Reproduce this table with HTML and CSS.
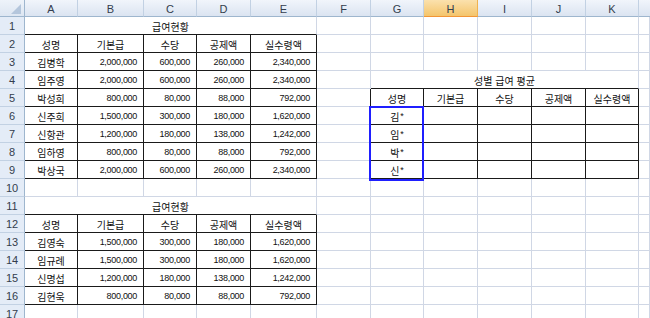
FILE: index.html
```html
<!DOCTYPE html>
<html lang="ko">
<head>
<meta charset="utf-8">
<link rel="stylesheet" href="styles.css">
</head>
<body>
<div class="sheet">
  <!-- column headers -->
  <div class="corner"><span class="tri"></span></div>
  <div class="ch">A</div><div class="ch">B</div><div class="ch">C</div><div class="ch">D</div><div class="ch">E</div><div class="ch">F</div><div class="ch">G</div><div class="ch sel">H</div><div class="ch">I</div><div class="ch">J</div><div class="ch">K</div><div class="ch last"></div>

  <!-- row 1 -->
  <div class="rh">1</div>
  <div class="c s5 tb">급여현황</div>
  <div class="c"></div><div class="c"></div><div class="c"></div><div class="c"></div><div class="c"></div><div class="c"></div><div class="c"></div>

  <!-- row 2 -->
  <div class="rh">2</div>
  <div class="c t">성명</div><div class="c t">기본급</div><div class="c t">수당</div><div class="c t">공제액</div><div class="c t">실수령액</div>
  <div class="c"></div><div class="c"></div><div class="c"></div><div class="c"></div><div class="c"></div><div class="c"></div><div class="c"></div>

  <!-- row 3 -->
  <div class="rh">3</div>
  <div class="c t">김병학</div><div class="c t n">2,000,000</div><div class="c t n">600,000</div><div class="c t n">260,000</div><div class="c t n">2,340,000</div>
  <div class="c"></div><div class="c"></div><div class="c"></div><div class="c"></div><div class="c"></div><div class="c"></div><div class="c"></div>

  <!-- row 4 -->
  <div class="rh">4</div>
  <div class="c t">임주영</div><div class="c t n">2,000,000</div><div class="c t n">600,000</div><div class="c t n">260,000</div><div class="c t n">2,340,000</div>
  <div class="c"></div><div class="c s5 tb">성별 급여 평균</div><div class="c"></div>

  <!-- row 5 -->
  <div class="rh">5</div>
  <div class="c t">박성희</div><div class="c t n">800,000</div><div class="c t n">80,000</div><div class="c t n">88,000</div><div class="c t n">792,000</div>
  <div class="c rb"></div><div class="c t">성명</div><div class="c t">기본급</div><div class="c t">수당</div><div class="c t">공제액</div><div class="c t">실수령액</div><div class="c"></div>

  <!-- row 6 -->
  <div class="rh">6</div>
  <div class="c t">신주희</div><div class="c t n">1,500,000</div><div class="c t n">300,000</div><div class="c t n">180,000</div><div class="c t n">1,620,000</div>
  <div class="c rb"></div><div class="c t anchor">김<span class="ast">*</span><div class="selbox"></div></div><div class="c t"></div><div class="c t"></div><div class="c t"></div><div class="c t"></div><div class="c"></div>

  <!-- row 7 -->
  <div class="rh">7</div>
  <div class="c t">신항관</div><div class="c t n">1,200,000</div><div class="c t n">180,000</div><div class="c t n">138,000</div><div class="c t n">1,242,000</div>
  <div class="c rb"></div><div class="c t">임<span class="ast">*</span></div><div class="c t"></div><div class="c t"></div><div class="c t"></div><div class="c t"></div><div class="c"></div>

  <!-- row 8 -->
  <div class="rh">8</div>
  <div class="c t">임하영</div><div class="c t n">800,000</div><div class="c t n">80,000</div><div class="c t n">88,000</div><div class="c t n">792,000</div>
  <div class="c rb"></div><div class="c t">박<span class="ast">*</span></div><div class="c t"></div><div class="c t"></div><div class="c t"></div><div class="c t"></div><div class="c"></div>

  <!-- row 9 -->
  <div class="rh">9</div>
  <div class="c t">박상국</div><div class="c t n">2,000,000</div><div class="c t n">600,000</div><div class="c t n">260,000</div><div class="c t n">2,340,000</div>
  <div class="c rb"></div><div class="c t">신<span class="ast">*</span></div><div class="c t"></div><div class="c t"></div><div class="c t"></div><div class="c t"></div><div class="c"></div>

  <!-- row 10 -->
  <div class="rh">10</div>
  <div class="c"></div><div class="c"></div><div class="c"></div><div class="c"></div><div class="c"></div><div class="c"></div><div class="c"></div><div class="c"></div><div class="c"></div><div class="c"></div><div class="c"></div><div class="c"></div>

  <!-- row 11 -->
  <div class="rh">11</div>
  <div class="c s5 tb">급여현황</div>
  <div class="c"></div><div class="c"></div><div class="c"></div><div class="c"></div><div class="c"></div><div class="c"></div><div class="c"></div>

  <!-- row 12 -->
  <div class="rh">12</div>
  <div class="c t">성명</div><div class="c t">기본급</div><div class="c t">수당</div><div class="c t">공제액</div><div class="c t">실수령액</div>
  <div class="c"></div><div class="c"></div><div class="c"></div><div class="c"></div><div class="c"></div><div class="c"></div><div class="c"></div>

  <!-- row 13 -->
  <div class="rh">13</div>
  <div class="c t">김영숙</div><div class="c t n">1,500,000</div><div class="c t n">300,000</div><div class="c t n">180,000</div><div class="c t n">1,620,000</div>
  <div class="c"></div><div class="c"></div><div class="c"></div><div class="c"></div><div class="c"></div><div class="c"></div><div class="c"></div>

  <!-- row 14 -->
  <div class="rh">14</div>
  <div class="c t">임규례</div><div class="c t n">1,500,000</div><div class="c t n">300,000</div><div class="c t n">180,000</div><div class="c t n">1,620,000</div>
  <div class="c"></div><div class="c"></div><div class="c"></div><div class="c"></div><div class="c"></div><div class="c"></div><div class="c"></div>

  <!-- row 15 -->
  <div class="rh">15</div>
  <div class="c t">신명섭</div><div class="c t n">1,200,000</div><div class="c t n">180,000</div><div class="c t n">138,000</div><div class="c t n">1,242,000</div>
  <div class="c"></div><div class="c"></div><div class="c"></div><div class="c"></div><div class="c"></div><div class="c"></div><div class="c"></div>

  <!-- row 16 -->
  <div class="rh">16</div>
  <div class="c t">김현욱</div><div class="c t n">800,000</div><div class="c t n">80,000</div><div class="c t n">88,000</div><div class="c t n">792,000</div>
  <div class="c"></div><div class="c"></div><div class="c"></div><div class="c"></div><div class="c"></div><div class="c"></div><div class="c"></div>

  <!-- row 17 -->
  <div class="rh">17</div>
  <div class="c"></div><div class="c"></div><div class="c"></div><div class="c"></div><div class="c"></div><div class="c"></div><div class="c"></div><div class="c"></div><div class="c"></div><div class="c"></div><div class="c"></div><div class="c"></div>
</div>
</body>
</html>
```
FILE: styles.css
```css
html, body {
  margin: 0;
  padding: 0;
  background: #ffffff;
  overflow: hidden;
}

.sheet {
  display: grid;
  grid-template-columns: 25px 53px 66px 53px 54px 66px 54px 53px 54px 54px 54px 53px 1fr;
  grid-template-rows: 17px repeat(17, 18px);
  width: 650px;
  height: 318px;
  overflow: hidden;
  font-family: "Liberation Sans", "Noto Sans CJK KR", sans-serif;
  font-size: 10px;
  color: #111;
}

.corner {
  box-sizing: border-box;
  background: linear-gradient(#eef3fa, #dde6f2);
  border-right: 1px solid #9eb6ce;
  border-bottom: 1px solid #9eb6ce;
  display: flex;
  justify-content: flex-end;
  align-items: flex-end;
  padding: 0 3px 2px 0;
}

.tri {
  width: 0;
  height: 0;
  border-left: 10px solid transparent;
  border-bottom: 10px solid #b4c6dc;
}

.ch {
  box-sizing: border-box;
  background: linear-gradient(#f1f5fb, #dbe4f1);
  border-right: 1px solid #c2d1e3;
  border-bottom: 1px solid #9eb6ce;
  display: flex;
  align-items: center;
  justify-content: center;
  font-family: "Liberation Sans", sans-serif;
  font-size: 11px;
  color: #333d4d;
  padding-top: 1px;
}

.ch.sel {
  background: linear-gradient(#fbe1ad, #f4c56c);
  border-right-color: #f0b24f;
  border-bottom-color: #f29536;
}

.ch.last {
  border-right: none;
}

.rh {
  box-sizing: border-box;
  background: #e4ecf7;
  border-right: 1px solid #9eb6ce;
  border-bottom: 1px solid #c2d1e3;
  display: flex;
  align-items: center;
  justify-content: center;
  font-family: "Liberation Sans", sans-serif;
  font-size: 11px;
  color: #333d4d;
  padding-top: 1px;
}

.c {
  box-sizing: border-box;
  border-right: 1px solid #d0d7e5;
  border-bottom: 1px solid #d0d7e5;
  display: flex;
  align-items: center;
  justify-content: center;
  white-space: nowrap;
  padding: 1px 5px 0 5px;
  overflow: visible;
}

.s5 {
  grid-column: span 5;
}

.t {
  border-right-color: #1a1a1a;
  border-bottom-color: #1a1a1a;
}

.tb {
  border-bottom-color: #1a1a1a;
}

.rb {
  border-right-color: #1a1a1a;
}

.n {
  justify-content: flex-end;
  padding-right: 6px;
  font-size: 9px;
  letter-spacing: -0.3px;
}

.ast {
  font-size: 9px;
  margin-left: 1px;
}

.anchor {
  position: relative;
}

.selbox {
  position: absolute;
  left: -2px;
  top: -1px;
  width: 55px;
  height: 75px;
  box-sizing: border-box;
  border: 2px solid #1f1fff;
  pointer-events: none;
}
```
